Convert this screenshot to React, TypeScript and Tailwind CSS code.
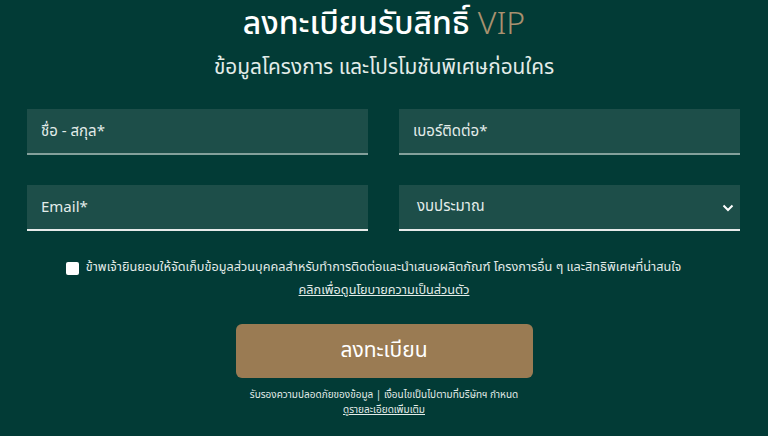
import React from 'react';

const font = { fontFamily: '"Noto Sans Thai", "Noto Sans", "Liberation Sans", sans-serif' };

const App: React.FC = () => {
  return (
    <div className="w-[768px] h-[436px] overflow-hidden bg-[#023b36] text-white" style={font}>
      <div className="flex flex-col items-center pt-[4px]">
        <h1 className="text-[32px] leading-[40px] font-medium">
          ลงทะเบียนรับสิทธิ์ <span className="font-light text-[#a8916f]">VIP</span>
        </h1>
        <p className="mt-[10px] text-[20.8px] leading-[28px] text-[#e3ece9]">ข้อมูลโครงการ และโปรโมชันพิเศษก่อนใคร</p>
      </div>

      <div className="mx-[27px] mt-[27px] grid grid-cols-2 gap-x-[31px] gap-y-[30px] w-[713px]">
        <input
          className="h-[46px] bg-[#1d4e49] border-b-2 border-[#84a09b] px-[14px] text-[15px] text-white placeholder:text-[#e3ece9] outline-none"
          placeholder="ชื่อ - สกุล*"
        />
        <input
          className="h-[46px] bg-[#1d4e49] border-b-2 border-[#84a09b] px-[14px] text-[15px] text-white placeholder:text-[#e3ece9] outline-none"
          placeholder="เบอร์ติดต่อ*"
        />
        <input
          className="h-[46px] bg-[#1d4e49] border-b-2 border-[#e6ebea] px-[14px] text-[15px] text-white placeholder:text-[#e3ece9] outline-none"
          placeholder="Email*"
        />
        <div className="relative h-[46px] bg-[#1d4e49] border-b-2 border-[#e6ebea] flex items-center px-[18px]">
          <span className="text-[15px] text-[#e3ece9]">งบประมาณ</span>
          <svg className="absolute right-[6px] top-[19px]" width="12" height="8" viewBox="0 0 12 8">
            <path d="M1.5 1.5 L6 6 L10.5 1.5" fill="none" stroke="#fff" strokeWidth="2" />
          </svg>
        </div>
      </div>

      <div className="mt-[29px] flex flex-col items-center">
        <div className="mr-[21px] flex items-center gap-[7px] text-[12.7px] leading-[16px] text-[#e3ece9]">
          <span className="w-[13px] h-[13px] rounded-[2px] bg-white" />
          <span>ข้าพเจ้ายินยอมให้จัดเก็บข้อมูลส่วนบุคคลสำหรับทำการติดต่อและนำเสนอผลิตภัณฑ์ โครงการอื่น ๆ และสิทธิพิเศษที่น่าสนใจ</span>
        </div>
        <a className="mt-[7px] text-[12.7px] leading-[16px] text-[#e3ece9] underline">คลิกเพื่อดูนโยบายความเป็นส่วนตัว</a>

        <button className="mt-[25px] w-[297px] h-[54px] rounded-[6px] bg-[#9a7b53] text-[21px] text-white">ลงทะเบียน</button>

        <p className="mt-[10px] text-[10px] leading-[15px] text-[#e3ece9]">รับรองความปลอดภัยของข้อมูล | เงื่อนไขเป็นไปตามที่บริษัทฯ กำหนด</p>
        <a className="text-[10px] leading-[15px] text-[#e3ece9] underline">ดูรายละเอียดเพิ่มเติม</a>
      </div>
    </div>
  );
};

export default App;
